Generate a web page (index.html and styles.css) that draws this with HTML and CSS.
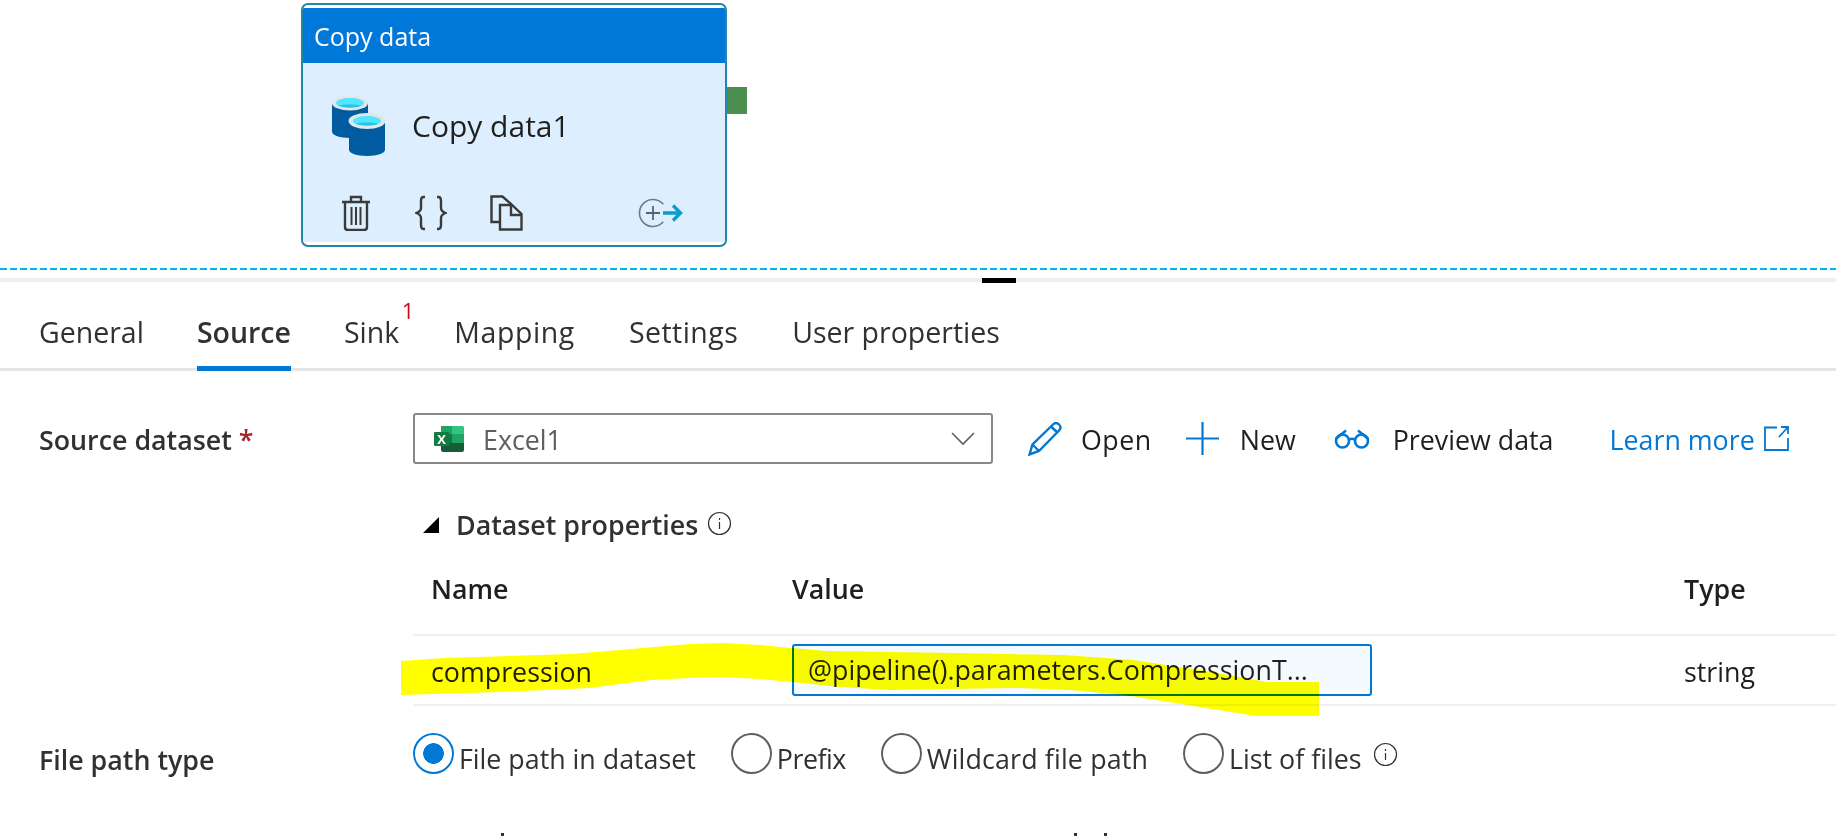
FILE: index.html
```html
<!DOCTYPE html>
<html lang="en">
<head>
<meta charset="utf-8">
<title>Copy data</title>
<link rel="stylesheet" href="styles.css">
</head>
<body>
<section class="canvas">
  <div class="activity">
    <div class="card">
      <div class="card-head">Copy data</div>
      <div class="card-body">
        <div class="card-main">
          <svg class="db-icon" width="58" height="64" viewBox="0 0 58 64">
            <path fill="#005ba1" d="M2 9v29c0 3 8 6 18 6s18-3 18-6V9z"/>
            <ellipse cx="20" cy="9" rx="18" ry="7.5" fill="#e4e6e6"/>
            <ellipse cx="20" cy="9" rx="14" ry="5" fill="#50e6ff"/>
            <path fill="#32bedd" d="M9 11.500c3-1.500 19-1.500 22 0-3 2.500-19 2.500-22 0z"/>
            <path fill="#005ba1" d="M19 27v29c0 3 8 6 18 6s18-3 18-6V27z"/>
            <ellipse cx="37" cy="27" rx="18.500" ry="8" fill="#dfe6ea"/>
            <ellipse cx="37" cy="27" rx="14" ry="5" fill="#50e6ff"/>
            <path fill="#32bedd" d="M26 29.500c3-1.500 19-1.500 22 0-3 2.500-19 2.500-22 0z"/>
          </svg>
          <span class="card-name">Copy data1</span>
        </div>
        <div class="card-actions">
          <svg class="act-trash" width="30" height="36" viewBox="0 0 30 36" fill="none" stroke="#3b3a39" stroke-width="2.400">
            <path d="M1 7h28M4 7v25c0 2 1 3 3 3h16c2 0 3-1 3-3V7M10 7V2h10v5"/>
            <path d="M10.500 12v18M15 12v18M19.500 12v18" stroke-width="2"/>
          </svg>
          <svg class="act-braces" width="32" height="36" viewBox="0 0 32 36" fill="none" stroke="#3b3a39" stroke-width="2.400">
            <path d="M10 2H8.500C6 2 6 4 6 6v7c0 3-2 4-4.500 5C4 19 6 20 6 23v7c0 2 0 4 2.500 4H10"/>
            <path d="M22 2h1.500C26 2 26 4 26 6v7c0 3 2 4 4.500 5-2.500 1-4.500 2-4.500 5v7c0 2 0 4-2.500 4H22"/>
          </svg>
          <svg class="act-copy" width="33" height="36" viewBox="0 0 33 36" fill="none" stroke="#3b3a39" stroke-width="2.400">
            <path d="M10 27H1.500V1.500h11l9 8"/>
            <path d="M10 10h12l9.500 9v15.500H10z"/>
            <path d="M21 10v10h10.500"/>
          </svg>
          <svg class="act-add" width="46" height="30" viewBox="0 0 46 30" fill="none">
            <path d="M25.300 6.300a13.500 13.500 0 1 0 0 17.400" stroke="#6f7b85" stroke-width="1.600"/>
            <path d="M8 15h14M15 8v14" stroke="#59636b" stroke-width="1.800"/>
            <path d="M25 15h17M35 7.500l7.500 7.500-7.500 7.500" stroke="#0d9ccb" stroke-width="3.400"/>
          </svg>
        </div>
      </div>
    </div>
    <div class="port"></div>
  </div>
</section>
<div class="dash"></div>

<div class="splitter"><span class="splitter-handle"></span></div>

<nav class="tabs">
  <span class="tab">General</span>
  <span class="tab tab-active">Source</span>
  <span class="tab tab-sink">Sink<sup class="badge">1</sup></span>
  <span class="tab tab-mapping">Mapping</span>
  <span class="tab tab-settings">Settings</span>
  <span class="tab">User properties</span>
</nav>

<section class="form-row dataset-row">
  <label class="form-label">Source dataset <span class="req">*</span></label>
  <div class="select">
    <svg class="xl-icon" width="30" height="28" viewBox="0 0 30 28">
      <path fill="#21a366" d="M7 1h21c1 0 2 1 2 2v6H7z"/>
      <path fill="#33c481" d="M18 1h10c1 0 2 1 2 2v6H18z"/>
      <path fill="#107c41" d="M7 9h23v9H7z"/>
      <path fill="#21a366" d="M18 9h12v9H18z"/>
      <path fill="#185c37" d="M7 18h23v7c0 1-1 2-2 2H9c-1 0-2-1-2-2z"/>
      <rect y="7" width="15" height="14" rx="1" fill="#107c41"/>
      <text class="xl-x" x="7.500" y="18.500">X</text>
    </svg>
    <span class="select-value">Excel1</span>
    <svg class="chevron" width="24" height="14" viewBox="0 0 24 14" fill="none" stroke="#605e5c" stroke-width="1.600"><path d="M1 1l11 11L23 1"/></svg>
  </div>
  <div class="toolbar">
    <span class="tool tool-open">
      <svg width="34" height="34" viewBox="0 0 34 34" fill="none" stroke="#0078d4" stroke-width="2.400">
        <path d="M1.500 32.500l3-10L25 2.500c2-2 4-2 6 0s2 4 0 6L11 29z"/>
        <path d="M4.500 22.500L11 29M23 4.500l7 6.500"/>
      </svg>
      <span class="tool-text">Open</span>
    </span>
    <span class="tool tool-new">
      <svg width="33" height="33" viewBox="0 0 33 33" fill="none" stroke="#0078d4" stroke-width="2.200"><path d="M0 16.500h33M16.500 0v33"/></svg>
      <span class="tool-text">New</span>
    </span>
    <span class="tool tool-preview">
      <svg width="36" height="20" viewBox="0 0 36 20" fill="none" stroke="#0078d4" stroke-width="2.600">
        <circle cx="8.500" cy="12" r="6.500"/><circle cx="27.500" cy="12" r="6.500"/>
        <path d="M15 10.500c2-1 4-1 6 0M1.500 10L12 1.500M34.500 10L24 1.500"/>
      </svg>
      <span class="tool-text">Preview data</span>
    </span>
    <a class="learn" href="#"><span class="tool-text">Learn more</span>
      <svg width="25" height="25" viewBox="0 0 25 25" fill="none" stroke="#0078d4" stroke-width="1.800"><path d="M13 1.500H1v22.500h23V12M15 11L24 1M17 1h7v7"/></svg>
    </a>
  </div>
</section>

<section class="props">
  <div class="props-title">
    <span class="caret"></span>
    <span>Dataset properties</span>
    <svg class="info" width="25" height="25" viewBox="0 0 25 25" fill="none" stroke="#323130" stroke-width="1.200"><circle cx="12.500" cy="12.500" r="11"/><path d="M12.500 11v7M12.500 7v2"/></svg>
  </div>
  <div class="table">
    <div class="thead">
      <span class="cell-name">Name</span>
      <span>Value</span>
      <span>Type</span>
    </div>
    <div class="tbody">
      <span class="cell-name">compression</span>
      <div class="input">@pipeline().parameters.CompressionT...</div>
      <span>string</span>
    </div>
  </div>
</section>

<section class="form-row radio-row">
  <label class="form-label">File path type</label>
  <div class="radios">
    <span class="radio radio-on">File path in dataset</span>
    <span class="radio radio-prefix">Prefix</span>
    <span class="radio radio-wild">Wildcard file path</span>
    <span class="radio">List of files</span>
    <svg class="info" width="25" height="25" viewBox="0 0 25 25" fill="none" stroke="#323130" stroke-width="1.200"><circle cx="12.500" cy="12.500" r="11"/><path d="M12.500 11v7M12.500 7v2"/></svg>
  </div>
</section>

<div class="clipped-row" aria-hidden="true">
  <span class="tick"></span><span class="tick tick-b"></span><span class="tick tick-c"></span>
</div>

<svg class="marker" width="1836" height="836" viewBox="0 0 1836 836">
  <path fill="#ffff00" d="M401 661L444 658 571 654 620 650 654 647 690 644 724 643 760 645 792 648 826 651 954 653 1064 655 1133 660 1200 670 1267 682 1319 682 1319 716 1256 716 1181 704 1125 695 1070 690 1018 688 950 689 890 690 840 687 792 682 760 679 724 677 690 678 650 680 590 688 500 692 401 695z"/>
</svg>
</body>
</html>
```

FILE: styles.css
```css
* { box-sizing: border-box; }

html, body {
  margin: 0;
  height: 836px;
  overflow: hidden;
  background: #fff;
}

body {
  position: relative;
  font-family: "Open Sans", "Noto Sans", sans-serif;
  font-size: 26.800px;
  line-height: 34px;
  color: #323130;
}

/* Pipeline canvas */
.canvas {
  height: 268px;
  padding: 3px 0 0 301px;
}

.dash {
  height: 2px;
  background: repeating-linear-gradient(90deg, #00b7f1 0 7px, transparent 7px 10px);
}

.activity {
  display: flex;
  align-items: flex-start;
}

.card {
  width: 426px;
  height: 244px;
  padding: 3px 0;
  background: #fff;
  border: 2px solid #2585a9;
  border-radius: 7px;
  overflow: hidden;
  display: flex;
  flex-direction: column;
}

.card-head {
  height: 55px;
  flex: none;
  padding-left: 11px;
  background: #0078d9;
  color: #fff;
  font-size: 25px;
  line-height: 56px;
}

.card-body {
  flex: 1;
  padding: 31px 0 0 27px;
  background: #ddefff;
}

.card-main {
  height: 64px;
  display: flex;
  align-items: center;
  gap: 24px;
}

.card-name {
  font-size: 30px;
  color: #201f1e;
}

.card-actions {
  display: flex;
  align-items: center;
  margin-top: 37px;
  padding-left: 11px;
}

.act-braces { margin-left: 44px; }
.act-copy { margin-left: 43px; }
.act-add { margin-left: 115px; }

.port {
  width: 20px;
  height: 27px;
  margin-top: 84px;
  background: #4a8f50;
}

/* Resize splitter */
.splitter {
  position: relative;
  height: 4px;
  margin-top: 8px;
  background: #eeeeee;
}

.splitter-handle {
  position: absolute;
  left: 982px;
  top: 0;
  width: 34px;
  height: 5px;
  background: #000;
}

/* Tabs */
.tabs {
  height: 89px;
  padding-left: 39px;
  display: flex;
  align-items: flex-end;
  gap: 54px;
  border-bottom: 3px solid #e5e5e5;
  font-size: 28.500px;
}

.tab {
  position: relative;
  height: 56px;
  margin-bottom: -3px;
  line-height: 34px;
  border-bottom: 5px solid transparent;
}

.tab-active {
  margin-left: -1px;
  font-weight: 600;
  border-bottom-color: #0078d4;
}

.tab-sink { margin-left: -1px; }
.tab-mapping { margin-left: 1px; letter-spacing: 0.6px; }
.tab-settings { letter-spacing: 0.45px; }

.badge {
  position: absolute;
  top: -18px;
  right: -15px;
  font-size: 22px;
  line-height: 26px;
  color: #c50f1f;
}

/* Form rows */
.form-row {
  display: flex;
  padding-left: 39px;
}

.form-label {
  width: 374px;
  flex: none;
  font-weight: 600;
}

.dataset-row {
  margin-top: 42px;
  align-items: center;
}

.dataset-row .form-label,
.select-value,
.tool-text { padding-top: 2px; }

.req { color: #a4262c; }

.select {
  width: 580px;
  height: 51px;
  display: flex;
  align-items: center;
  padding: 0 16px 0 19px;
  border: 2px solid #8a8886;
  border-radius: 3px;
}

.xl-x {
  font-family: "Open Sans", sans-serif;
  font-size: 13px;
  font-weight: 700;
  fill: #fff;
  text-anchor: middle;
}

.select-value {
  margin-left: 19px;
  flex: 1;
  color: #605e5c;
}

.toolbar {
  display: flex;
  align-items: center;
  margin-left: 35px;
}

.tool {
  display: flex;
  align-items: center;
  gap: 19px;
  color: #201f1e;
}

.tool-open { letter-spacing: 0.5px; }
.tool-new { margin-left: 34px; gap: 21px; }
.tool-preview { margin-left: 38px; gap: 23px; }

.learn {
  display: flex;
  align-items: center;
  gap: 9px;
  margin-left: 56px;
  color: #0078d4;
  text-decoration: none;
}

/* Dataset properties */
.props { margin: 43px 0 0 413px; }

.props-title {
  display: flex;
  align-items: center;
  height: 35px;
  font-weight: 600;
}

.caret {
  width: 0;
  height: 0;
  margin: 0 17px 0 10px;
  border-style: solid;
  border-width: 0 0 16px 16px;
  border-color: transparent transparent #000 transparent;
}

.info {
  flex: none;
  margin-left: 10px;
}

.props-title .info { margin-left: 9px; margin-bottom: 3px; }

.thead, .tbody {
  display: grid;
  grid-template-columns: 379px 892px 1fr;
  align-items: center;
  border-bottom: 2px solid #f0f0f0;
}

.thead {
  height: 94px;
  padding-top: 2px;
  font-weight: 600;
  color: #201f1e;
}

.tbody { height: 70px; color: #201f1e; }
.tbody > span { padding-top: 4px; }

.cell-name { padding-left: 18px; }

.input {
  width: 580px;
  height: 52px;
  padding-left: 14px;
  line-height: 48px;
  background: #f5faff;
  border: 2px solid #0078d4;
  border-radius: 3px;
}

/* Radios */
.radio-row {
  margin-top: 31px;
  height: 48px;
  align-items: flex-end;
}

.radio-row .form-label { line-height: 50px; }

.radios {
  display: flex;
  align-items: center;
  gap: 35px;
}

.radio {
  display: flex;
  align-items: center;
  gap: 5px;
}

.radio-prefix { letter-spacing: -0.5px; }
.radio-wild { letter-spacing: 0.15px; }

.radio::before {
  content: "";
  width: 37px;
  height: 37px;
  margin-bottom: 11px;
  flex: none;
  border: 2px solid #605e5c;
  border-radius: 50%;
}

.radio-on::before {
  border-color: #0078d4;
  background: radial-gradient(circle, #0078d4 10px, #fff 10.600px);
}

.radios .info { margin-left: -24px; margin-bottom: 10px; }

/* Tips of the next, cut-off row */
.clipped-row {
  display: flex;
  margin-top: 48px;
  padding-left: 501px;
}

.tick {
  width: 3px;
  height: 3px;
  background: #323130;
}

.tick-b { margin-left: 570px; }
.tick-c { margin-left: 27px; }

/* Yellow marker stroke drawn over the screenshot */
.marker {
  position: absolute;
  left: 0;
  top: 0;
  mix-blend-mode: multiply;
  pointer-events: none;
}
```
